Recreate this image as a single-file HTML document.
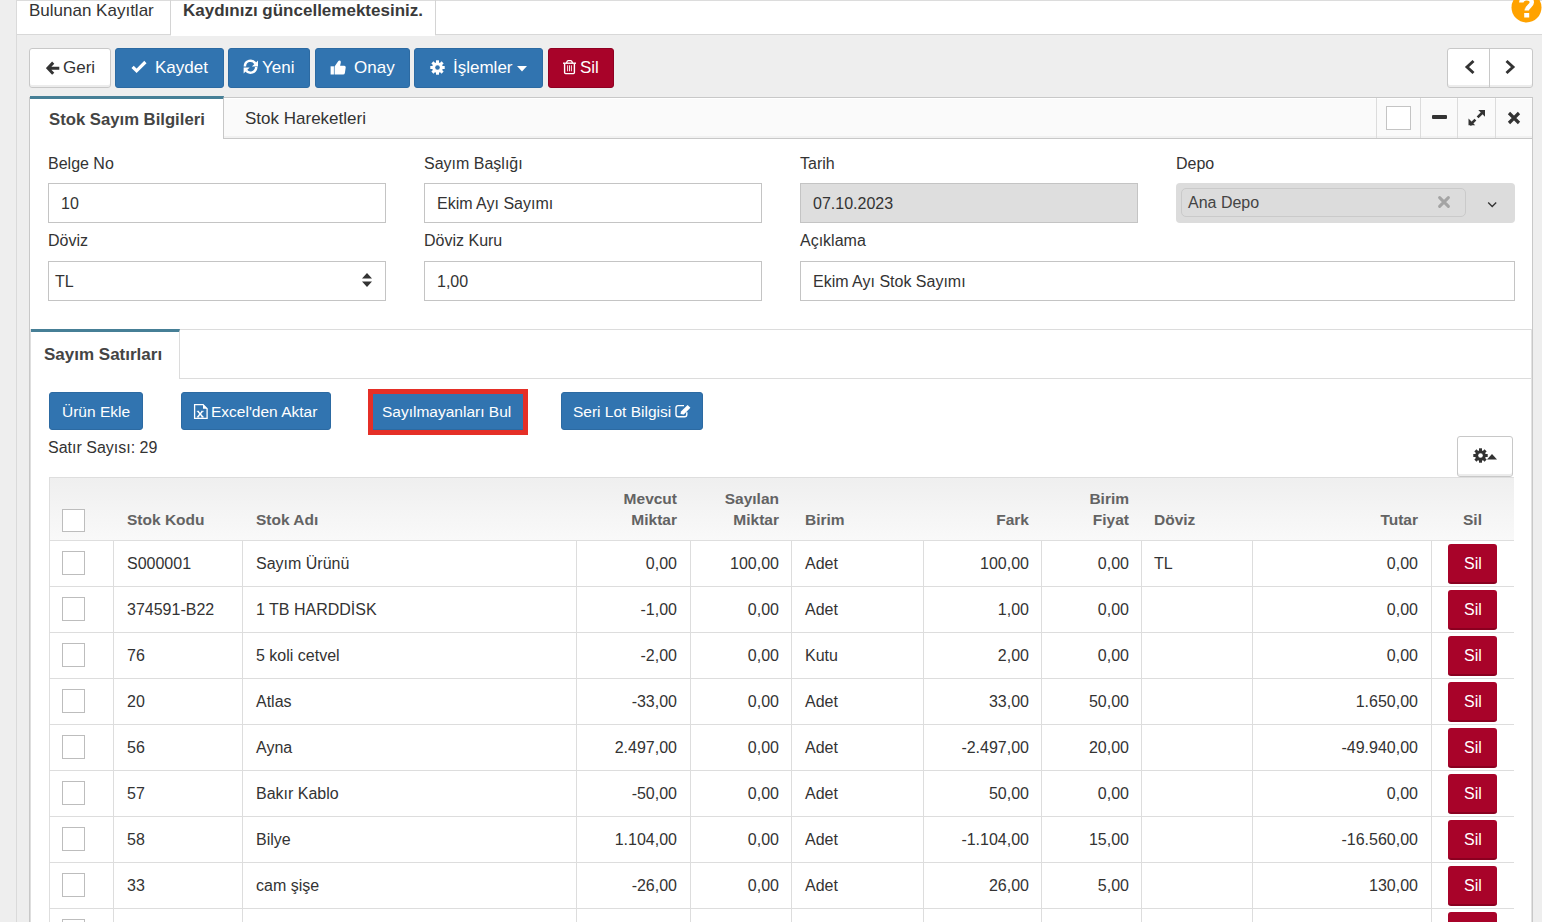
<!DOCTYPE html>
<html><head><meta charset="utf-8">
<style>
*{box-sizing:border-box;}
html,body{margin:0;padding:0;}
body{width:1542px;height:922px;overflow:hidden;position:relative;background:#eeeeee;font-family:"Liberation Sans",sans-serif;color:#333;}
.a{position:absolute;display:block;}
.t{position:absolute;white-space:nowrap;line-height:1;}
</style></head><body>
<div class="a" style="left:16px;top:0px;width:1px;height:922px;background:#dadada"></div>
<div class="a" style="left:17px;top:0px;width:1525px;height:35px;background:#fff;border-top:1px solid #dcdcdc;border-bottom:1px solid #d8d8d8"></div>
<div class="a" style="left:170px;top:0px;width:1px;height:35px;background:#d4d4d4"></div>
<div class="a" style="left:171px;top:1px;width:264px;height:35px;background:#fff"></div>
<div class="a" style="left:435px;top:0px;width:1px;height:35px;background:#d4d4d4"></div>
<div class="t" style="left:29px;top:2px;font-size:17px;font-weight:normal;color:#333;">Bulunan Kayıtlar</div>
<div class="t" style="left:183px;top:2px;font-size:17px;font-weight:bold;color:#3a3a3a;">Kaydınızı güncellemektesiniz.</div>
<svg class="a" style="left:1511px;top:-8px;" width="31" height="31" viewBox="0 0 31 31"><circle cx="15.5" cy="15.5" r="15" fill="#ffa200"/><path d="M10.3 10.5 C10.3 5.5 20.8 4.5 20.8 10.5 C20.8 14 15.7 14.5 15.7 18.5" stroke="#fff" stroke-width="4.4" fill="none"/><rect x="13.2" y="21" width="5" height="4.5" fill="#fff"/></svg>
<div class="a" style="left:29px;top:48px;width:82px;height:40px;background:#fff;border:1px solid #c8c8c8;border-radius:3px;box-shadow:inset 0 -2px 0 #ececec"></div>
<svg class="a" style="left:46px;top:61px;" width="14" height="15" viewBox="0 0 14 15"><path d="M7.2 1.6 L1.9 7.2 L7.2 12.8 M2.5 7.2 H13.3" stroke="#333" stroke-width="3" fill="none" stroke-linejoin="miter"/></svg>
<div class="t" style="left:63px;top:59px;font-size:17px;font-weight:normal;color:#333;">Geri</div>
<div class="a" style="left:115px;top:48px;width:109px;height:40px;background:#3174b0;border:1px solid #2c6aa2;border-radius:3px;"></div>
<svg class="a" style="left:131px;top:60px;" width="16" height="14" viewBox="0 0 16 14"><path d="M1.6 6.8 L5.6 10.8 L14.4 2" stroke="#fff" stroke-width="3.2" fill="none"/></svg>
<div class="t" style="left:155px;top:59px;font-size:17px;font-weight:normal;color:#fff;">Kaydet</div>
<div class="a" style="left:228px;top:48px;width:82px;height:40px;background:#3174b0;border:1px solid #2c6aa2;border-radius:3px;"></div>
<svg class="a" style="left:243px;top:59px;" width="16" height="16" viewBox="0 0 16 16"><path d="M1.9 7.4 A5.6 5.6 0 0 1 12.4 4.6" stroke="#fff" stroke-width="2.5" fill="none"/><path d="M13.2 8.0 A5.6 5.6 0 0 1 3.1 11.4" stroke="#fff" stroke-width="2.5" fill="none"/><path d="M15 1.5 V7.6 H8.9 Z" fill="#fff"/><path d="M0.6 14.5 V8.4 H6.7 Z" fill="#fff"/></svg>
<div class="t" style="left:262px;top:59px;font-size:17px;font-weight:normal;color:#fff;">Yeni</div>
<div class="a" style="left:315px;top:48px;width:95px;height:40px;background:#3174b0;border:1px solid #2c6aa2;border-radius:3px;"></div>
<svg class="a" style="left:330px;top:60px;" width="16" height="15" viewBox="0 0 16 15"><rect x="0.6" y="6.3" width="3.3" height="8.2" fill="#fff"/><path d="M4.6 6.6 L8 1.6 Q9 -0.2 10.3 0.8 Q11.1 1.6 10.6 3.6 L10.1 5.8 H14.3 Q15.9 5.9 15.7 7.5 L14.9 13 Q14.6 14.5 13.1 14.5 H4.6 Z" fill="#fff"/></svg>
<div class="t" style="left:354px;top:59px;font-size:17px;font-weight:normal;color:#fff;">Onay</div>
<div class="a" style="left:414px;top:48px;width:129px;height:40px;background:#3174b0;border:1px solid #2c6aa2;border-radius:3px;"></div>
<svg class="a" style="left:430px;top:60px;" width="15" height="15" viewBox="0 0 15 15"><circle cx="7.5" cy="7.5" r="5.3" fill="#fff"/><rect x="6" y="0.3" width="3" height="4" fill="#fff" transform="rotate(0 7.5 7.5)"/><rect x="6" y="0.3" width="3" height="4" fill="#fff" transform="rotate(45 7.5 7.5)"/><rect x="6" y="0.3" width="3" height="4" fill="#fff" transform="rotate(90 7.5 7.5)"/><rect x="6" y="0.3" width="3" height="4" fill="#fff" transform="rotate(135 7.5 7.5)"/><rect x="6" y="0.3" width="3" height="4" fill="#fff" transform="rotate(180 7.5 7.5)"/><rect x="6" y="0.3" width="3" height="4" fill="#fff" transform="rotate(225 7.5 7.5)"/><rect x="6" y="0.3" width="3" height="4" fill="#fff" transform="rotate(270 7.5 7.5)"/><rect x="6" y="0.3" width="3" height="4" fill="#fff" transform="rotate(315 7.5 7.5)"/><circle cx="7.5" cy="7.5" r="2.3" fill="#3174b0"/></svg>
<div class="t" style="left:453px;top:59px;font-size:17px;font-weight:normal;color:#fff;">İşlemler</div>
<svg class="a" style="left:517px;top:66px;" width="10" height="6" viewBox="0 0 10 6"><path d="M0 0 H10 L5 5.5 Z" fill="#fff"/></svg>
<div class="a" style="left:548px;top:48px;width:66px;height:40px;background:#a80329;border:1px solid #8f0022;border-radius:3px;"></div>
<svg class="a" style="left:562px;top:59px;" width="15" height="16" viewBox="0 0 15 16"><path d="M1 4.2 H14" stroke="#fff" stroke-width="1.4" fill="none"/><path d="M4.6 4.2 Q5 1.6 6.3 1.6 H8.7 Q10 1.6 10.4 4.2" stroke="#fff" stroke-width="1.3" fill="none"/><path d="M2.6 4.5 V13.6 Q2.6 14.6 3.6 14.6 H11.4 Q12.4 14.6 12.4 13.6 V4.5" stroke="#fff" stroke-width="1.4" fill="none"/><path d="M5.6 6.3 V12.3 M7.5 6.3 V12.3 M9.4 6.3 V12.3" stroke="#fff" stroke-width="0.9"/></svg>
<div class="t" style="left:580px;top:59px;font-size:17px;font-weight:normal;color:#fff;">Sil</div>
<div class="a" style="left:1447px;top:48px;width:86px;height:40px;background:#fff;border:1px solid #c8c8c8;border-radius:3px;box-shadow:inset 0 -2px 0 #ececec"></div>
<div class="a" style="left:1489px;top:48px;width:1px;height:40px;background:#c8c8c8"></div>
<svg class="a" style="left:1463px;top:59px;" width="13" height="16" viewBox="0 0 13 16"><path d="M10.5 2 L4 8 L10.5 14" stroke="#333" stroke-width="2.9" fill="none"/></svg>
<svg class="a" style="left:1504px;top:59px;" width="13" height="16" viewBox="0 0 13 16"><path d="M2.5 2 L9 8 L2.5 14" stroke="#333" stroke-width="2.9" fill="none"/></svg>
<div class="a" style="left:29px;top:97px;width:1504px;height:830px;background:#fff;border:1px solid #c8c8c8"></div>
<div class="a" style="left:30px;top:98px;width:1502px;height:41px;background:#fafafa;border-top:1px solid #fff;border-bottom:1px solid #c8c8c8;box-shadow:inset 0 -2px 0 #f1f1f1"></div>
<div class="a" style="left:30px;top:96px;width:194px;height:43px;background:#fff;border-top:3px solid #467f96;border-right:1px solid #c8c8c8"></div>
<div class="t" style="left:49px;top:112px;font-size:16.7px;font-weight:bold;color:#444;">Stok Sayım Bilgileri</div>
<div class="t" style="left:245px;top:110px;font-size:17px;font-weight:normal;color:#333;">Stok Hareketleri</div>
<div class="a" style="left:1376px;top:98px;width:1px;height:40px;background:#dcdcdc"></div>
<div class="a" style="left:1420px;top:98px;width:1px;height:40px;background:#dcdcdc"></div>
<div class="a" style="left:1457px;top:98px;width:1px;height:40px;background:#dcdcdc"></div>
<div class="a" style="left:1495px;top:98px;width:1px;height:40px;background:#dcdcdc"></div>
<div class="a" style="left:1386px;top:106px;width:25px;height:24px;background:#fff;border:1px solid #c4c4c4"></div>
<div class="a" style="left:1432px;top:115px;width:15px;height:4px;background:#333;border-radius:1px"></div>
<svg class="a" style="left:1467px;top:109px;" width="19" height="17" viewBox="0 0 19 17"><path d="M16 3 L10.6 8.4 M8.4 10.6 L3 16" stroke="#333" stroke-width="2.6" fill="none"/><path d="M11.3 1 H18 V7.7 Z" fill="#333"/><path d="M1.5 9.5 V16.2 H8.2 Z" fill="#333"/></svg>
<svg class="a" style="left:1507px;top:111px;" width="14" height="14" viewBox="0 0 14 14"><path d="M2 2 L12 12 M12 2 L2 12" stroke="#333" stroke-width="3.2" fill="none"/></svg>
<div class="t" style="left:48px;top:156px;font-size:16px;font-weight:normal;color:#333;">Belge No</div>
<div class="t" style="left:424px;top:156px;font-size:16px;font-weight:normal;color:#333;">Sayım Başlığı</div>
<div class="t" style="left:800px;top:156px;font-size:16px;font-weight:normal;color:#333;">Tarih</div>
<div class="t" style="left:1176px;top:156px;font-size:16px;font-weight:normal;color:#333;">Depo</div>
<div class="t" style="left:48px;top:233px;font-size:16px;font-weight:normal;color:#333;">Döviz</div>
<div class="t" style="left:424px;top:233px;font-size:16px;font-weight:normal;color:#333;">Döviz Kuru</div>
<div class="t" style="left:800px;top:233px;font-size:16px;font-weight:normal;color:#333;">Açıklama</div>
<div class="a" style="left:48px;top:183px;width:338px;height:40px;background:#fff;border:1px solid #c4c4c4"></div>
<div class="t" style="left:61px;top:196px;font-size:16px;font-weight:normal;color:#333;">10</div>
<div class="a" style="left:424px;top:183px;width:338px;height:40px;background:#fff;border:1px solid #c4c4c4"></div>
<div class="t" style="left:437px;top:196px;font-size:16px;font-weight:normal;color:#333;">Ekim Ayı Sayımı</div>
<div class="a" style="left:800px;top:183px;width:338px;height:40px;background:#dedede;border:1px solid #c4c4c4"></div>
<div class="t" style="left:813px;top:196px;font-size:16px;font-weight:normal;color:#333;">07.10.2023</div>
<div class="a" style="left:1176px;top:183px;width:339px;height:40px;background:#dcdcdc;border-radius:4px"></div>
<div class="a" style="left:1181px;top:188px;width:285px;height:29px;background:#dcdcdc;border:1px solid #cacaca;border-radius:5px"></div>
<div class="t" style="left:1188px;top:195px;font-size:16px;font-weight:normal;color:#444;">Ana Depo</div>
<svg class="a" style="left:1437px;top:195px;" width="14" height="14" viewBox="0 0 14 14"><path d="M2.6 2.6 L11.4 11.4 M11.4 2.6 L2.6 11.4" stroke="#a4a4a4" stroke-width="3" stroke-linecap="round" fill="none"/></svg>
<svg class="a" style="left:1487px;top:201px;" width="11" height="8" viewBox="0 0 11 8"><path d="M1.2 1.6 L5.2 5.6 L9.2 1.6" stroke="#333" stroke-width="1.35" fill="none"/></svg>
<div class="a" style="left:48px;top:261px;width:338px;height:40px;background:#fff;border:1px solid #c4c4c4"></div>
<div class="t" style="left:55px;top:274px;font-size:16px;font-weight:normal;color:#333;">TL</div>
<svg class="a" style="left:361px;top:272px;" width="12" height="16" viewBox="0 0 12 16"><path d="M1 6.5 L6 1 L11 6.5 Z M1 9.5 L6 15 L11 9.5 Z" fill="#333"/></svg>
<div class="a" style="left:424px;top:261px;width:338px;height:40px;background:#fff;border:1px solid #c4c4c4"></div>
<div class="t" style="left:437px;top:274px;font-size:16px;font-weight:normal;color:#333;">1,00</div>
<div class="a" style="left:800px;top:261px;width:715px;height:40px;background:#fff;border:1px solid #c4c4c4"></div>
<div class="t" style="left:813px;top:274px;font-size:16px;font-weight:normal;color:#333;">Ekim Ayı Stok Sayımı</div>
<div class="a" style="left:30px;top:329px;width:1502px;height:1px;background:#dcdcdc"></div>
<div class="a" style="left:30px;top:329px;width:1px;height:593px;background:#dedede"></div>
<div class="a" style="left:1531px;top:329px;width:1px;height:593px;background:#e2e2e2"></div>
<div class="a" style="left:179px;top:378px;width:1352px;height:1px;background:#dcdcdc"></div>
<div class="a" style="left:31px;top:329px;width:149px;height:50px;background:#fff;border-top:3px solid #467f96;border-right:1px solid #dcdcdc"></div>
<div class="t" style="left:44px;top:346px;font-size:17px;font-weight:bold;color:#444;">Sayım Satırları</div>
<div class="a" style="left:49px;top:392px;width:94px;height:38px;background:#3174b0;border:1px solid #2c6aa2;border-radius:3px"></div>
<div class="t" style="left:62px;top:404px;font-size:15.5px;font-weight:normal;color:#fff;">Ürün Ekle</div>
<div class="a" style="left:181px;top:392px;width:150px;height:38px;background:#3174b0;border:1px solid #2c6aa2;border-radius:3px"></div>
<div class="t" style="left:211px;top:404px;font-size:15.5px;font-weight:normal;color:#fff;">Excel'den Aktar</div>
<svg class="a" style="left:193px;top:403px;" width="16" height="17" viewBox="0 0 16 17"><path d="M1.6 1.6 H10 L14.1 5.7 V15.4 H1.6 Z" stroke="#fff" stroke-width="1.3" fill="none"/><path d="M10 1.2 L14.5 5.7 H10 Z" fill="#fff"/><path d="M4.8 8.3 L9.8 14 M9.4 8.3 L4.6 14" stroke="#fff" stroke-width="1.4"/><path d="M3.8 14 H6.3 M8.3 14 H10.8 M3.8 8.3 H6.1 M8.3 8.3 H10.6" stroke="#fff" stroke-width="0.9"/></svg>
<div class="a" style="left:368px;top:389px;width:160px;height:46px;border:5px solid #e52f27"></div>
<div class="a" style="left:373px;top:394px;width:150px;height:36px;background:#3174b0;border-bottom:1px solid #2c6aa2"></div>
<div class="t" style="left:382px;top:404px;font-size:15.5px;font-weight:normal;color:#fff;">Sayılmayanları Bul</div>
<div class="a" style="left:561px;top:392px;width:142px;height:38px;background:#3174b0;border:1px solid #2c6aa2;border-radius:3px"></div>
<div class="t" style="left:573px;top:404px;font-size:15.5px;font-weight:normal;color:#fff;">Seri Lot Bilgisi</div>
<svg class="a" style="left:675px;top:404px;" width="17" height="14" viewBox="0 0 17 14"><path d="M9 1.6 H3.2 Q1 1.6 1 3.8 V10.6 Q1 12.8 3.2 12.8 H9.6 Q11.8 12.8 11.8 10.6 V8.3" stroke="#fff" stroke-width="1.4" fill="none"/><path d="M5.5 10 L6 7.6 L12.6 1 L15.4 3.8 L8.8 10.4 Z" fill="#fff"/></svg>
<div class="t" style="left:48px;top:440px;font-size:16px;font-weight:normal;color:#333;">Satır Sayısı: 29</div>
<div class="a" style="left:1457px;top:436px;width:56px;height:41px;background:#fff;border:1px solid #c8c8c8;border-radius:3px;box-shadow:inset 0 -2px 0 #ececec"></div>
<svg class="a" style="left:1473px;top:448px;" width="15" height="15" viewBox="0 0 15 15"><circle cx="7.5" cy="7.5" r="5.3" fill="#333"/><rect x="6" y="0.3" width="3" height="4" fill="#333" transform="rotate(0 7.5 7.5)"/><rect x="6" y="0.3" width="3" height="4" fill="#333" transform="rotate(45 7.5 7.5)"/><rect x="6" y="0.3" width="3" height="4" fill="#333" transform="rotate(90 7.5 7.5)"/><rect x="6" y="0.3" width="3" height="4" fill="#333" transform="rotate(135 7.5 7.5)"/><rect x="6" y="0.3" width="3" height="4" fill="#333" transform="rotate(180 7.5 7.5)"/><rect x="6" y="0.3" width="3" height="4" fill="#333" transform="rotate(225 7.5 7.5)"/><rect x="6" y="0.3" width="3" height="4" fill="#333" transform="rotate(270 7.5 7.5)"/><rect x="6" y="0.3" width="3" height="4" fill="#333" transform="rotate(315 7.5 7.5)"/><circle cx="7.5" cy="7.5" r="2.3" fill="#fff"/></svg>
<svg class="a" style="left:1487px;top:454px;" width="10" height="6" viewBox="0 0 10 6"><path d="M0 5.5 H10 L5 0 Z" fill="#333"/></svg>
<div class="a" style="left:49px;top:477px;width:1465px;height:64px;background:linear-gradient(#efefef,#f9f9f9);border-top:1px solid #dedede;border-left:1px solid #dedede;border-bottom:1px solid #dedede"></div>
<div class="a" style="left:49px;top:541px;width:1465px;height:382px;background:#fff;border-left:1px solid #dedede"></div>
<div class="a" style="left:49px;top:586px;width:1465px;height:1px;background:#dddddd"></div>
<div class="a" style="left:49px;top:632px;width:1465px;height:1px;background:#dddddd"></div>
<div class="a" style="left:49px;top:678px;width:1465px;height:1px;background:#dddddd"></div>
<div class="a" style="left:49px;top:724px;width:1465px;height:1px;background:#dddddd"></div>
<div class="a" style="left:49px;top:770px;width:1465px;height:1px;background:#dddddd"></div>
<div class="a" style="left:49px;top:816px;width:1465px;height:1px;background:#dddddd"></div>
<div class="a" style="left:49px;top:862px;width:1465px;height:1px;background:#dddddd"></div>
<div class="a" style="left:49px;top:908px;width:1465px;height:1px;background:#dddddd"></div>
<div class="a" style="left:49px;top:954px;width:1465px;height:1px;background:#dddddd"></div>
<div class="a" style="left:113px;top:541px;width:1px;height:382px;background:#dddddd"></div>
<div class="a" style="left:242px;top:541px;width:1px;height:382px;background:#dddddd"></div>
<div class="a" style="left:576px;top:541px;width:1px;height:382px;background:#dddddd"></div>
<div class="a" style="left:690px;top:541px;width:1px;height:382px;background:#dddddd"></div>
<div class="a" style="left:791px;top:541px;width:1px;height:382px;background:#dddddd"></div>
<div class="a" style="left:923px;top:541px;width:1px;height:382px;background:#dddddd"></div>
<div class="a" style="left:1041px;top:541px;width:1px;height:382px;background:#dddddd"></div>
<div class="a" style="left:1141px;top:541px;width:1px;height:382px;background:#dddddd"></div>
<div class="a" style="left:1252px;top:541px;width:1px;height:382px;background:#dddddd"></div>
<div class="a" style="left:1431px;top:541px;width:1px;height:382px;background:#dddddd"></div>
<div class="a" style="left:62px;top:509px;width:23px;height:23px;background:#fff;border:1px solid #bdbdbd"></div>
<div class="t" style="left:127px;top:512px;font-size:15.5px;font-weight:bold;color:#636363;">Stok Kodu</div>
<div class="t" style="left:256px;top:512px;font-size:15.5px;font-weight:bold;color:#636363;">Stok Adı</div>
<div class="t" style="right:865px;top:491px;font-size:15.5px;font-weight:bold;color:#636363;text-align:right;">Mevcut</div>
<div class="t" style="right:865px;top:512px;font-size:15.5px;font-weight:bold;color:#636363;text-align:right;">Miktar</div>
<div class="t" style="right:763px;top:491px;font-size:15.5px;font-weight:bold;color:#636363;text-align:right;">Sayılan</div>
<div class="t" style="right:763px;top:512px;font-size:15.5px;font-weight:bold;color:#636363;text-align:right;">Miktar</div>
<div class="t" style="left:805px;top:512px;font-size:15.5px;font-weight:bold;color:#636363;">Birim</div>
<div class="t" style="right:513px;top:512px;font-size:15.5px;font-weight:bold;color:#636363;text-align:right;">Fark</div>
<div class="t" style="right:413px;top:491px;font-size:15.5px;font-weight:bold;color:#636363;text-align:right;">Birim</div>
<div class="t" style="right:413px;top:512px;font-size:15.5px;font-weight:bold;color:#636363;text-align:right;">Fiyat</div>
<div class="t" style="left:1154px;top:512px;font-size:15.5px;font-weight:bold;color:#636363;">Döviz</div>
<div class="t" style="right:124px;top:512px;font-size:15.5px;font-weight:bold;color:#636363;text-align:right;">Tutar</div>
<div class="t" style="left:1463px;top:512px;font-size:15.5px;font-weight:bold;color:#636363;">Sil</div>
<div class="a" style="left:62px;top:551px;width:23px;height:24px;background:#fff;border:1px solid #bdbdbd"></div>
<div class="t" style="left:127px;top:556px;font-size:16px;font-weight:normal;color:#333;">S000001</div>
<div class="t" style="left:256px;top:556px;font-size:16px;font-weight:normal;color:#333;">Sayım Ürünü</div>
<div class="t" style="right:865px;top:556px;font-size:16px;font-weight:normal;color:#333;text-align:right;">0,00</div>
<div class="t" style="right:763px;top:556px;font-size:16px;font-weight:normal;color:#333;text-align:right;">100,00</div>
<div class="t" style="left:805px;top:556px;font-size:16px;font-weight:normal;color:#333;">Adet</div>
<div class="t" style="right:513px;top:556px;font-size:16px;font-weight:normal;color:#333;text-align:right;">100,00</div>
<div class="t" style="right:413px;top:556px;font-size:16px;font-weight:normal;color:#333;text-align:right;">0,00</div>
<div class="t" style="left:1154px;top:556px;font-size:16px;font-weight:normal;color:#333;">TL</div>
<div class="t" style="right:124px;top:556px;font-size:16px;font-weight:normal;color:#333;text-align:right;">0,00</div>
<div class="a" style="left:1448px;top:544px;width:49px;height:40px;background:#a80329;border-bottom:2px solid #8a0020;border-radius:3px"></div>
<div class="t" style="left:1464px;top:556px;font-size:16px;font-weight:normal;color:#fff;">Sil</div>
<div class="a" style="left:62px;top:597px;width:23px;height:24px;background:#fff;border:1px solid #bdbdbd"></div>
<div class="t" style="left:127px;top:602px;font-size:16px;font-weight:normal;color:#333;">374591-B22</div>
<div class="t" style="left:256px;top:602px;font-size:16px;font-weight:normal;color:#333;">1 TB HARDDİSK</div>
<div class="t" style="right:865px;top:602px;font-size:16px;font-weight:normal;color:#333;text-align:right;">-1,00</div>
<div class="t" style="right:763px;top:602px;font-size:16px;font-weight:normal;color:#333;text-align:right;">0,00</div>
<div class="t" style="left:805px;top:602px;font-size:16px;font-weight:normal;color:#333;">Adet</div>
<div class="t" style="right:513px;top:602px;font-size:16px;font-weight:normal;color:#333;text-align:right;">1,00</div>
<div class="t" style="right:413px;top:602px;font-size:16px;font-weight:normal;color:#333;text-align:right;">0,00</div>
<div class="t" style="left:1154px;top:602px;font-size:16px;font-weight:normal;color:#333;"></div>
<div class="t" style="right:124px;top:602px;font-size:16px;font-weight:normal;color:#333;text-align:right;">0,00</div>
<div class="a" style="left:1448px;top:590px;width:49px;height:40px;background:#a80329;border-bottom:2px solid #8a0020;border-radius:3px"></div>
<div class="t" style="left:1464px;top:602px;font-size:16px;font-weight:normal;color:#fff;">Sil</div>
<div class="a" style="left:62px;top:643px;width:23px;height:24px;background:#fff;border:1px solid #bdbdbd"></div>
<div class="t" style="left:127px;top:648px;font-size:16px;font-weight:normal;color:#333;">76</div>
<div class="t" style="left:256px;top:648px;font-size:16px;font-weight:normal;color:#333;">5 koli cetvel</div>
<div class="t" style="right:865px;top:648px;font-size:16px;font-weight:normal;color:#333;text-align:right;">-2,00</div>
<div class="t" style="right:763px;top:648px;font-size:16px;font-weight:normal;color:#333;text-align:right;">0,00</div>
<div class="t" style="left:805px;top:648px;font-size:16px;font-weight:normal;color:#333;">Kutu</div>
<div class="t" style="right:513px;top:648px;font-size:16px;font-weight:normal;color:#333;text-align:right;">2,00</div>
<div class="t" style="right:413px;top:648px;font-size:16px;font-weight:normal;color:#333;text-align:right;">0,00</div>
<div class="t" style="left:1154px;top:648px;font-size:16px;font-weight:normal;color:#333;"></div>
<div class="t" style="right:124px;top:648px;font-size:16px;font-weight:normal;color:#333;text-align:right;">0,00</div>
<div class="a" style="left:1448px;top:636px;width:49px;height:40px;background:#a80329;border-bottom:2px solid #8a0020;border-radius:3px"></div>
<div class="t" style="left:1464px;top:648px;font-size:16px;font-weight:normal;color:#fff;">Sil</div>
<div class="a" style="left:62px;top:689px;width:23px;height:24px;background:#fff;border:1px solid #bdbdbd"></div>
<div class="t" style="left:127px;top:694px;font-size:16px;font-weight:normal;color:#333;">20</div>
<div class="t" style="left:256px;top:694px;font-size:16px;font-weight:normal;color:#333;">Atlas</div>
<div class="t" style="right:865px;top:694px;font-size:16px;font-weight:normal;color:#333;text-align:right;">-33,00</div>
<div class="t" style="right:763px;top:694px;font-size:16px;font-weight:normal;color:#333;text-align:right;">0,00</div>
<div class="t" style="left:805px;top:694px;font-size:16px;font-weight:normal;color:#333;">Adet</div>
<div class="t" style="right:513px;top:694px;font-size:16px;font-weight:normal;color:#333;text-align:right;">33,00</div>
<div class="t" style="right:413px;top:694px;font-size:16px;font-weight:normal;color:#333;text-align:right;">50,00</div>
<div class="t" style="left:1154px;top:694px;font-size:16px;font-weight:normal;color:#333;"></div>
<div class="t" style="right:124px;top:694px;font-size:16px;font-weight:normal;color:#333;text-align:right;">1.650,00</div>
<div class="a" style="left:1448px;top:682px;width:49px;height:40px;background:#a80329;border-bottom:2px solid #8a0020;border-radius:3px"></div>
<div class="t" style="left:1464px;top:694px;font-size:16px;font-weight:normal;color:#fff;">Sil</div>
<div class="a" style="left:62px;top:735px;width:23px;height:24px;background:#fff;border:1px solid #bdbdbd"></div>
<div class="t" style="left:127px;top:740px;font-size:16px;font-weight:normal;color:#333;">56</div>
<div class="t" style="left:256px;top:740px;font-size:16px;font-weight:normal;color:#333;">Ayna</div>
<div class="t" style="right:865px;top:740px;font-size:16px;font-weight:normal;color:#333;text-align:right;">2.497,00</div>
<div class="t" style="right:763px;top:740px;font-size:16px;font-weight:normal;color:#333;text-align:right;">0,00</div>
<div class="t" style="left:805px;top:740px;font-size:16px;font-weight:normal;color:#333;">Adet</div>
<div class="t" style="right:513px;top:740px;font-size:16px;font-weight:normal;color:#333;text-align:right;">-2.497,00</div>
<div class="t" style="right:413px;top:740px;font-size:16px;font-weight:normal;color:#333;text-align:right;">20,00</div>
<div class="t" style="left:1154px;top:740px;font-size:16px;font-weight:normal;color:#333;"></div>
<div class="t" style="right:124px;top:740px;font-size:16px;font-weight:normal;color:#333;text-align:right;">-49.940,00</div>
<div class="a" style="left:1448px;top:728px;width:49px;height:40px;background:#a80329;border-bottom:2px solid #8a0020;border-radius:3px"></div>
<div class="t" style="left:1464px;top:740px;font-size:16px;font-weight:normal;color:#fff;">Sil</div>
<div class="a" style="left:62px;top:781px;width:23px;height:24px;background:#fff;border:1px solid #bdbdbd"></div>
<div class="t" style="left:127px;top:786px;font-size:16px;font-weight:normal;color:#333;">57</div>
<div class="t" style="left:256px;top:786px;font-size:16px;font-weight:normal;color:#333;">Bakır Kablo</div>
<div class="t" style="right:865px;top:786px;font-size:16px;font-weight:normal;color:#333;text-align:right;">-50,00</div>
<div class="t" style="right:763px;top:786px;font-size:16px;font-weight:normal;color:#333;text-align:right;">0,00</div>
<div class="t" style="left:805px;top:786px;font-size:16px;font-weight:normal;color:#333;">Adet</div>
<div class="t" style="right:513px;top:786px;font-size:16px;font-weight:normal;color:#333;text-align:right;">50,00</div>
<div class="t" style="right:413px;top:786px;font-size:16px;font-weight:normal;color:#333;text-align:right;">0,00</div>
<div class="t" style="left:1154px;top:786px;font-size:16px;font-weight:normal;color:#333;"></div>
<div class="t" style="right:124px;top:786px;font-size:16px;font-weight:normal;color:#333;text-align:right;">0,00</div>
<div class="a" style="left:1448px;top:774px;width:49px;height:40px;background:#a80329;border-bottom:2px solid #8a0020;border-radius:3px"></div>
<div class="t" style="left:1464px;top:786px;font-size:16px;font-weight:normal;color:#fff;">Sil</div>
<div class="a" style="left:62px;top:827px;width:23px;height:24px;background:#fff;border:1px solid #bdbdbd"></div>
<div class="t" style="left:127px;top:832px;font-size:16px;font-weight:normal;color:#333;">58</div>
<div class="t" style="left:256px;top:832px;font-size:16px;font-weight:normal;color:#333;">Bilye</div>
<div class="t" style="right:865px;top:832px;font-size:16px;font-weight:normal;color:#333;text-align:right;">1.104,00</div>
<div class="t" style="right:763px;top:832px;font-size:16px;font-weight:normal;color:#333;text-align:right;">0,00</div>
<div class="t" style="left:805px;top:832px;font-size:16px;font-weight:normal;color:#333;">Adet</div>
<div class="t" style="right:513px;top:832px;font-size:16px;font-weight:normal;color:#333;text-align:right;">-1.104,00</div>
<div class="t" style="right:413px;top:832px;font-size:16px;font-weight:normal;color:#333;text-align:right;">15,00</div>
<div class="t" style="left:1154px;top:832px;font-size:16px;font-weight:normal;color:#333;"></div>
<div class="t" style="right:124px;top:832px;font-size:16px;font-weight:normal;color:#333;text-align:right;">-16.560,00</div>
<div class="a" style="left:1448px;top:820px;width:49px;height:40px;background:#a80329;border-bottom:2px solid #8a0020;border-radius:3px"></div>
<div class="t" style="left:1464px;top:832px;font-size:16px;font-weight:normal;color:#fff;">Sil</div>
<div class="a" style="left:62px;top:873px;width:23px;height:24px;background:#fff;border:1px solid #bdbdbd"></div>
<div class="t" style="left:127px;top:878px;font-size:16px;font-weight:normal;color:#333;">33</div>
<div class="t" style="left:256px;top:878px;font-size:16px;font-weight:normal;color:#333;">cam şişe</div>
<div class="t" style="right:865px;top:878px;font-size:16px;font-weight:normal;color:#333;text-align:right;">-26,00</div>
<div class="t" style="right:763px;top:878px;font-size:16px;font-weight:normal;color:#333;text-align:right;">0,00</div>
<div class="t" style="left:805px;top:878px;font-size:16px;font-weight:normal;color:#333;">Adet</div>
<div class="t" style="right:513px;top:878px;font-size:16px;font-weight:normal;color:#333;text-align:right;">26,00</div>
<div class="t" style="right:413px;top:878px;font-size:16px;font-weight:normal;color:#333;text-align:right;">5,00</div>
<div class="t" style="left:1154px;top:878px;font-size:16px;font-weight:normal;color:#333;"></div>
<div class="t" style="right:124px;top:878px;font-size:16px;font-weight:normal;color:#333;text-align:right;">130,00</div>
<div class="a" style="left:1448px;top:866px;width:49px;height:40px;background:#a80329;border-bottom:2px solid #8a0020;border-radius:3px"></div>
<div class="t" style="left:1464px;top:878px;font-size:16px;font-weight:normal;color:#fff;">Sil</div>
<div class="a" style="left:62px;top:919px;width:23px;height:24px;background:#fff;border:1px solid #bdbdbd"></div>
<div class="t" style="left:127px;top:924px;font-size:16px;font-weight:normal;color:#333;"></div>
<div class="t" style="left:256px;top:924px;font-size:16px;font-weight:normal;color:#333;"></div>
<div class="t" style="right:865px;top:924px;font-size:16px;font-weight:normal;color:#333;text-align:right;"></div>
<div class="t" style="right:763px;top:924px;font-size:16px;font-weight:normal;color:#333;text-align:right;"></div>
<div class="t" style="left:805px;top:924px;font-size:16px;font-weight:normal;color:#333;"></div>
<div class="t" style="right:513px;top:924px;font-size:16px;font-weight:normal;color:#333;text-align:right;"></div>
<div class="t" style="right:413px;top:924px;font-size:16px;font-weight:normal;color:#333;text-align:right;"></div>
<div class="t" style="left:1154px;top:924px;font-size:16px;font-weight:normal;color:#333;"></div>
<div class="t" style="right:124px;top:924px;font-size:16px;font-weight:normal;color:#333;text-align:right;"></div>
<div class="a" style="left:1448px;top:912px;width:49px;height:40px;background:#a80329;border-bottom:2px solid #8a0020;border-radius:3px"></div>
<div class="t" style="left:1464px;top:924px;font-size:16px;font-weight:normal;color:#fff;">Sil</div>
</body></html>
